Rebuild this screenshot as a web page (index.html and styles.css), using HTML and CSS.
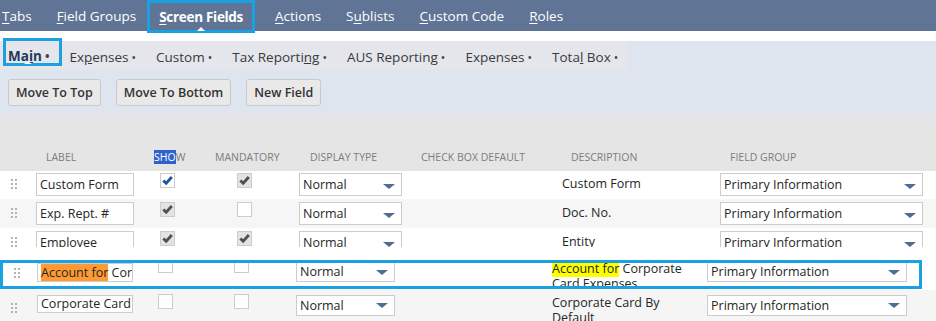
FILE: index.html
```html
<!DOCTYPE html>
<html lang="en">
<head>
  <meta charset="UTF-8">
  <meta name="viewport" content="width=device-width, initial-scale=1.0">
  <title>Screen Fields</title>
  <link rel="stylesheet" href="styles.css">
</head>
<body>
  <nav class="tabs">
    <a class="tab"><u>T</u>abs</a>
    <a class="tab"><u>F</u>ield Groups</a>
    <a class="tab tab-active"><u>S</u>creen Fields</a>
    <a class="tab"><u>A</u>ctions</a>
    <a class="tab">S<u>u</u>blists</a>
    <a class="tab"><u>C</u>ustom Code</a>
    <a class="tab"><u>R</u>oles</a>
  </nav>

  <div class="subtab-area">
    <div class="subtabs">
      <span class="subtab subtab-active">Ma<u>i</u>n<span class="dot">•</span></span>
      <span class="subtab">Ex<u>p</u>enses<span class="dot">•</span></span>
      <span class="subtab">Custom<span class="dot">•</span></span>
      <span class="subtab">Tax Reporti<u>ng</u><span class="dot">•</span></span>
      <span class="subtab">AUS Reporting<span class="dot">•</span></span>
      <span class="subtab">Expenses<span class="dot">•</span></span>
      <span class="subtab">Tota<u>l</u> Box<span class="dot">•</span></span>
    </div>
    <div class="actions">
      <button>Move To Top</button>
      <button>Move To Bottom</button>
      <button>New Field</button>
    </div>
  </div>

  <div class="list">
    <div class="list-head">
      <span></span>
      <span class="h-label">Label</span>
      <span><span class="sel">Sho</span>w</span>
      <span>Mandatory</span>
      <span class="h-display">Display Type</span>
      <span>Check Box Default</span>
      <span class="h-desc">Description</span>
      <span class="h-group">Field Group</span>
    </div>

    <div class="rows">
      <div class="row">
        <span class="handle"><svg width="6" height="10" viewBox="0 0 6 10"><g fill="#b3b3b3"><rect x="0" y="0" width="2" height="2"/><rect x="4" y="0" width="2" height="2"/><rect x="0" y="4" width="2" height="2"/><rect x="4" y="4" width="2" height="2"/><rect x="0" y="8" width="2" height="2"/><rect x="4" y="8" width="2" height="2"/></g></svg></span>
        <span class="text">Custom Form</span>
        <span class="cb cb-show"><svg width="13" height="13" viewBox="0 0 13 13"><path d="M2.3 6.4 L5.2 9.3 L10.8 3" fill="none" stroke="#1f56a3" stroke-width="2.8"/></svg></span>
        <span class="cb cb-mand cb-on"><svg width="13" height="13" viewBox="0 0 13 13"><path d="M2.3 6.4 L5.2 9.3 L10.8 3" fill="none" stroke="#505050" stroke-width="2.8"/></svg></span>
        <span class="select">Normal</span>
        <span></span>
        <span class="desc">Custom Form</span>
        <span class="select select-group">Primary Information</span>
      </div>
      <div class="row row-alt">
        <span class="handle"><svg width="6" height="10" viewBox="0 0 6 10"><g fill="#b3b3b3"><rect x="0" y="0" width="2" height="2"/><rect x="4" y="0" width="2" height="2"/><rect x="0" y="4" width="2" height="2"/><rect x="4" y="4" width="2" height="2"/><rect x="0" y="8" width="2" height="2"/><rect x="4" y="8" width="2" height="2"/></g></svg></span>
        <span class="text">Exp. Rept. #</span>
        <span class="cb cb-show cb-on"><svg width="13" height="13" viewBox="0 0 13 13"><path d="M2.3 6.4 L5.2 9.3 L10.8 3" fill="none" stroke="#505050" stroke-width="2.8"/></svg></span>
        <span class="cb cb-mand"></span>
        <span class="select">Normal</span>
        <span></span>
        <span class="desc">Doc. No.</span>
        <span class="select select-group">Primary Information</span>
      </div>
      <div class="row">
        <span class="handle"><svg width="6" height="10" viewBox="0 0 6 10"><g fill="#b3b3b3"><rect x="0" y="0" width="2" height="2"/><rect x="4" y="0" width="2" height="2"/><rect x="0" y="4" width="2" height="2"/><rect x="4" y="4" width="2" height="2"/><rect x="0" y="8" width="2" height="2"/><rect x="4" y="8" width="2" height="2"/></g></svg></span>
        <span class="text">Employee</span>
        <span class="cb cb-show cb-on"><svg width="13" height="13" viewBox="0 0 13 13"><path d="M2.3 6.4 L5.2 9.3 L10.8 3" fill="none" stroke="#505050" stroke-width="2.8"/></svg></span>
        <span class="cb cb-mand cb-on"><svg width="13" height="13" viewBox="0 0 13 13"><path d="M2.3 6.4 L5.2 9.3 L10.8 3" fill="none" stroke="#505050" stroke-width="2.8"/></svg></span>
        <span class="select">Normal</span>
        <span></span>
        <span class="desc">Entity</span>
        <span class="select select-group">Primary Information</span>
      </div>
    </div>

    <div class="row row-shift row-focus">
      <span class="handle"><svg width="6" height="10" viewBox="0 0 6 10"><g fill="#b3b3b3"><rect x="0" y="0" width="2" height="2"/><rect x="4" y="0" width="2" height="2"/><rect x="0" y="4" width="2" height="2"/><rect x="4" y="4" width="2" height="2"/><rect x="0" y="8" width="2" height="2"/><rect x="4" y="8" width="2" height="2"/></g></svg></span>
      <span class="text"><mark class="hl-orange">Account for</mark> Corporate Card Expenses</span>
      <span class="cb cb-show"></span>
      <span class="cb cb-mand"></span>
      <span class="select">Normal</span>
      <span></span>
      <span class="desc"><mark class="hl-yellow">Account for</mark> Corporate Card Expenses</span>
      <span class="select select-group">Primary Information</span>
    </div>

    <div class="row row-shift row-last">
      <span class="handle"><svg width="6" height="10" viewBox="0 0 6 10"><g fill="#b3b3b3"><rect x="0" y="0" width="2" height="2"/><rect x="4" y="0" width="2" height="2"/><rect x="0" y="4" width="2" height="2"/><rect x="4" y="4" width="2" height="2"/><rect x="0" y="8" width="2" height="2"/><rect x="4" y="8" width="2" height="2"/></g></svg></span>
      <span class="text">Corporate Card By Default</span>
      <span class="cb cb-show"></span>
      <span class="cb cb-mand"></span>
      <span class="select">Normal</span>
      <span></span>
      <span class="desc">Corporate Card By Default</span>
      <span class="select select-group">Primary Information</span>
    </div>
  </div>
</body>
</html>
```

FILE: styles.css
```css
body {
  margin: 0;
  width: 936px;
  height: 321px;
  overflow: hidden;
  font-family: "Open Sans", "Liberation Sans", sans-serif;
  color: #333;
  background: #fff;
}

/* top tabs */
.tabs {
  display: flex;
  align-items: center;
  gap: 25px;
  height: 31px;
  box-sizing: border-box;
  padding: 1px 0 0 2px;
  background: #607596;
  font-size: 13.5px;
}
.tab {
  color: #fff;
}
.tab u {
  text-underline-offset: 2px;
}
.tab-active {
  position: relative;
  align-self: flex-start;
  display: flex;
  align-items: center;
  height: 33px;
  box-sizing: border-box;
  margin: -1px -5px 0 -14px;
  padding: 1px 9px 0;
  border: 3px solid #1ba1e2;
  font-weight: 700;
  letter-spacing: -0.3px;
}
.tab-active::after {
  content: "";
  position: absolute;
  left: 50%;
  bottom: -1px;
  margin-left: -4px;
  border-left: 4px solid transparent;
  border-right: 4px solid transparent;
  border-bottom: 4px solid #fff;
}

/* subtabs + buttons */
.subtab-area {
  margin-top: 10px;
  padding-bottom: 8px;
  background: #dfe5ee;
}
.subtabs {
  display: flex;
  align-items: center;
  gap: 20px;
  width: max-content;
  height: 29px;
  box-sizing: border-box;
  padding: 2px 10px 0 8px;
  background: #e4e6eb;
  font-size: 13.5px;
  color: #3a3a3a;
}
.dot {
  margin-left: 3px;
  font-size: 12px;
  color: #444;
}
.subtab-active {
  position: relative;
  align-self: flex-start;
  height: 28px;
  box-sizing: border-box;
  margin: -5px -13px 0 -5px;
  padding: 6px 10px 0 2px;
  border: 3px solid #1ba1e2;
  font-weight: 700;
  color: #253858;
}
.subtab-active::after {
  content: "";
  position: absolute;
  left: 18px;
  bottom: -1px;
  border-left: 4px solid transparent;
  border-right: 4px solid transparent;
  border-bottom: 3px solid #fff;
}
.actions {
  display: flex;
  gap: 15px;
  padding: 9px 0 0 8px;
}
button {
  height: 27px;
  padding: 0 7px;
  font-family: "Open Sans", "Liberation Sans", sans-serif;
  font-size: 12.5px;
  font-weight: 600;
  color: #333;
  background: #e9e9e9;
  border: 1px solid #c9c9c9;
  border-radius: 3px;
}

/* list */
.list-head, .row {
  display: grid;
  grid-template-columns: 36px 118px 61px 84px 122px 141px 158px 1fr;
}
.list-head {
  height: 57px;
  box-sizing: border-box;
  align-items: end;
  padding-bottom: 7px;
  background: #e5e5e5;
  font-size: 10.5px;
  line-height: 14px;
  text-transform: uppercase;
  color: #7c7c7c;
  white-space: nowrap;
}
.h-label { padding-left: 10px; }
.h-display { padding-left: 11px; }
.h-desc { padding-left: 9px; }
.h-group { padding-left: 10px; }
.sel {
  background: #2f62cc;
  color: #fff;
}

.rows {
  height: 76px;
  overflow: hidden;
}
.row {
  height: 29px;
  box-sizing: border-box;
  padding-top: 3px;
  align-items: start;
  font-size: 12.5px;
  color: #262626;
}
.rows .row:first-child {
  height: 28px;
  padding-top: 2px;
}
.row-alt {
  background: #f6f6f6;
}
.handle {
  display: block;
  margin: 6px 0 0 11px;
  line-height: 0;
}
.text, .select {
  display: block;
  height: 23px;
  box-sizing: border-box;
  padding: 0 3px;
  border: 1px solid #ccc;
  background: #fff;
  line-height: 21px;
  white-space: nowrap;
  overflow: hidden;
}
.text {
  width: 98px;
}
.select {
  position: relative;
  width: 103px;
}
.select::after {
  content: "";
  position: absolute;
  right: 6px;
  top: 10px;
  border-left: 6px solid transparent;
  border-right: 6px solid transparent;
  border-top: 5px solid #4f6d94;
}
.select-group {
  width: 203px;
}
.cb {
  display: block;
  width: 15px;
  height: 15px;
  box-sizing: border-box;
  border: 1px solid #ccc;
  background: #fff;
  line-height: 0;
}
.cb-on {
  background: #e3e3e3;
}
.cb-show { margin-left: 6px; }
.cb-mand { margin-left: 22px; }
.desc {
  margin-top: 3px;
  line-height: 15px;
}
mark {
  color: inherit;
}
.hl-orange { background: #ff9a33; }
.hl-yellow { background: #ffff00; }

.row-shift {
  grid-template-columns: 37px 117px 61px 81px 122px 134px 155px 1fr;
}
.row-shift .text { width: 96px; }
.row-shift .select { width: 99px; }
.row-shift .select-group { width: 200px; }
.row-shift .cb-show { margin-left: 4px; }
.row-shift .cb-mand { margin-left: 19px; }
.row-shift .desc { width: 145px; }

.row-focus {
  grid-template-columns: 34px 117px 61px 81px 122px 134px 155px 1fr;
  height: 29px;
  margin: 13px 14px 0 0;
  padding-top: 0;
  border: 3px solid #1ba1e2;
  overflow: hidden;
}
.row-focus .handle { margin-top: 5px; }
.row-focus .text { height: 19px; line-height: 17px; }
.row-focus .select { height: 20px; margin-top: -1px; line-height: 18px; }
.row-focus .select::after { top: 7px; }
.row-focus .cb { margin-top: -5px; }
.row-focus .desc { margin-top: -2px; }

.row-last {
  height: 31px;
  margin-top: 1px;
  padding-top: 5px;
  background: #f5f5f5;
  overflow: hidden;
}
.row-last .handle { margin-top: 8px; }
.row-last .text { height: 18px; line-height: 16px; }
.row-last .select { height: 21px; line-height: 19px; }
.row-last .select::after { top: 7px; }
.row-last .cb { margin-top: -1px; }
.row-last .desc { margin-top: 0; }
```
